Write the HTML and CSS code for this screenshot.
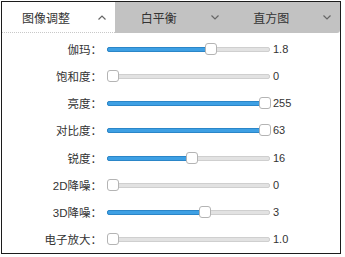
FILE: index.html
```html
<!DOCTYPE html>
<html lang="zh-CN">
<head>
  <meta charset="UTF-8" />
  <title>图像调整</title>
  <link rel="stylesheet" href="styles.css">
</head>
<body>
  <div class="panel">
    <!-- Tabs -->
    <div class="tabs">
      <div class="tab active">
        <span class="tab-title">图像调整</span>
        <svg class="chev" width="8" height="5" viewBox="0 0 8 5"><polyline points="0.5,4.5 4,1 7.5,4.5" /></svg>
      </div>
      <div class="tab">
        <span class="tab-title">白平衡</span>
        <svg class="chev" width="8" height="5" viewBox="0 0 8 5"><polyline points="0.5,0.5 4,4 7.5,0.5" /></svg>
      </div>
      <div class="tab">
        <span class="tab-title">直方图</span>
        <svg class="chev" width="8" height="5" viewBox="0 0 8 5"><polyline points="0.5,0.5 4,4 7.5,0.5" /></svg>
      </div>
    </div>

    <!-- Sliders -->
    <div class="rows">
      <div class="row">
        <span class="label">伽玛：</span>
        <div class="slider" style="--p:0.645"><div class="fill"></div><div class="thumb"></div></div>
        <span class="value">1.8</span>
      </div>
      <div class="row">
        <span class="label">饱和度：</span>
        <div class="slider" style="--p:0"><div class="fill"></div><div class="thumb"></div></div>
        <span class="value">0</span>
      </div>
      <div class="row">
        <span class="label">亮度：</span>
        <div class="slider" style="--p:1"><div class="fill"></div><div class="thumb"></div></div>
        <span class="value">255</span>
      </div>
      <div class="row">
        <span class="label">对比度：</span>
        <div class="slider" style="--p:1"><div class="fill"></div><div class="thumb"></div></div>
        <span class="value">63</span>
      </div>
      <div class="row">
        <span class="label">锐度：</span>
        <div class="slider" style="--p:0.52"><div class="fill"></div><div class="thumb"></div></div>
        <span class="value">16</span>
      </div>
      <div class="row">
        <span class="label">2D降噪：</span>
        <div class="slider" style="--p:0"><div class="fill"></div><div class="thumb"></div></div>
        <span class="value">0</span>
      </div>
      <div class="row">
        <span class="label">3D降噪：</span>
        <div class="slider" style="--p:0.605"><div class="fill"></div><div class="thumb"></div></div>
        <span class="value">3</span>
      </div>
      <div class="row">
        <span class="label">电子放大：</span>
        <div class="slider" style="--p:0"><div class="fill"></div><div class="thumb"></div></div>
        <span class="value">1.0</span>
      </div>
    </div>
  </div>
</body>
</html>
```

FILE: styles.css
```css
body { margin: 0; background: #fff; font-family: "Liberation Sans", "Noto Sans CJK SC", sans-serif; color: #333; }
.panel { margin: 1px 0 0 1px; width: 338px; height: 251px; border: 1px solid #1c1c1c; overflow: hidden; }

.tabs { display: flex; height: 31px; }
.tab { flex: 1; display: flex; align-items: center; background: #c2c2c2; font-size: 12px; color: #333; }
.tab:last-child { border-bottom-right-radius: 3px; }
.tab.active { background: #fff; border-bottom: 1px dotted #c8c8c8; }
.tab-title { width: 88px; text-align: center; }
.chev { margin-left: 8px; }
.chev polyline { fill: none; stroke: #666; stroke-width: 1.2; }

.rows { padding-top: 2px; }
.row { display: flex; align-items: center; height: 27.25px; }
.label { width: 100px; text-align: right; font-size: 11.5px; color: #333; }
.value { margin-left: 3px; font-size: 11px; color: #333; }

.slider { position: relative; width: 163px; height: 12px; margin-left: 5px; }
.slider::before {
  content: "";
  position: absolute;
  left: 0; right: 0; top: 4px;
  height: 3px;
  background: #e2e2e2;
  border: 1px solid #cfcfcf;
  border-radius: 2px;
}
.fill {
  position: absolute;
  left: 0; top: 4px;
  width: calc(var(--p) * 152px + 6px);
  height: 3px;
  background: #3ea0e4;
  border: 1px solid #2b86c8;
  border-radius: 2px;
}
.thumb {
  position: absolute;
  top: 0;
  left: calc(var(--p) * 152px);
  width: 10px;
  height: 10px;
  background: #fff;
  border: 1px solid #b4b4b4;
  border-radius: 3px;
}
```
